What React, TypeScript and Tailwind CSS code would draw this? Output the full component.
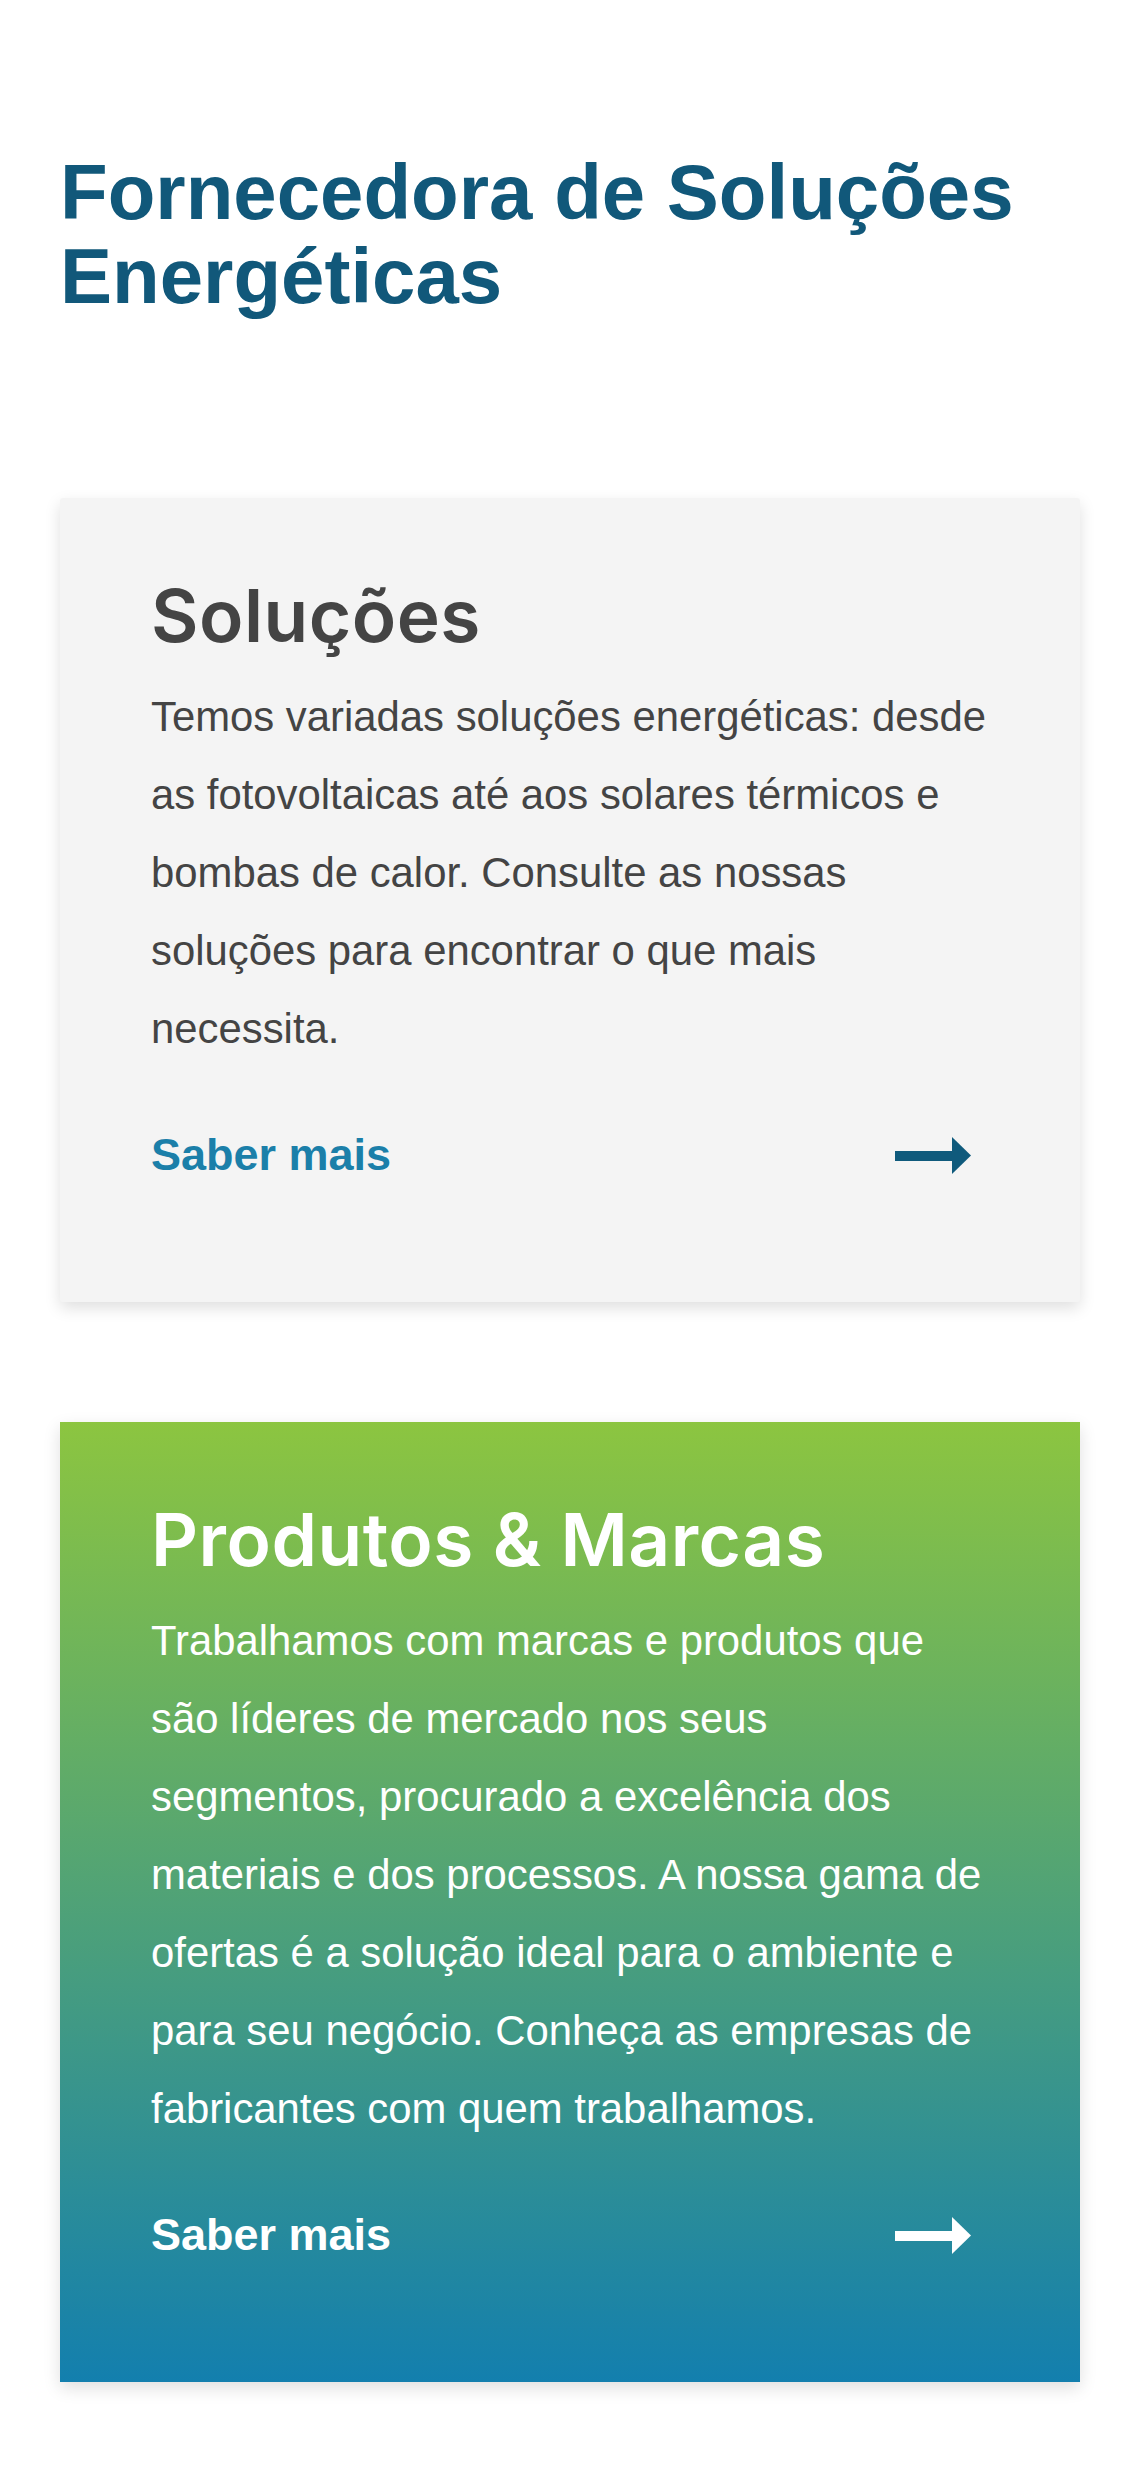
import React from "react";

function Arrow({ color }: { color: string }) {
  return (
    <svg width="76" height="37" viewBox="0 0 76 37" className="mr-[19px] shrink-0" aria-hidden="true">
      <rect x="0" y="14" width="58" height="10" fill={color} />
      <polygon points="57,0 76,18.5 57,37" fill={color} />
    </svg>
  );
}

type CardProps = {
  title: string;
  body: string;
  variant: "light" | "gradient";
};

function Card({ title, body, variant }: CardProps) {
  const light = variant === "light";
  return (
    <div
      className={
        light
          ? "rounded-[3px] bg-[#f4f4f4] pl-[91px] pr-[90px] pt-[78px] pb-[124px] shadow-[0_6px_16px_rgba(0,0,0,0.13)]"
          : "bg-[linear-gradient(180deg,#8cc540_0%,#137fae_100%)] pl-[91px] pr-[90px] pt-[78px] pb-[124px] shadow-[0_6px_16px_rgba(0,0,0,0.13)]"
      }
    >
      <h2
        className={
          light
            ? "font-['Inter','Noto_Sans',sans-serif] text-[73px] leading-[80px] font-semibold tracking-[0.5px] text-[#444444]"
            : "font-['Inter','Noto_Sans',sans-serif] text-[73px] leading-[80px] font-semibold tracking-[0.5px] text-white"
        }
      >
        {title}
      </h2>
      <p
        className={
          light
            ? "mt-[22px] font-['Liberation_Sans',Arial,sans-serif] text-[41.85px] leading-[78px] text-[#444444]"
            : "mt-[22px] font-['Liberation_Sans',Arial,sans-serif] text-[41.85px] leading-[78px] text-white"
        }
      >
        {body}
      </p>
      <div className="mt-[64px] flex items-center justify-between">
        <span
          className={
            light
              ? "font-['Liberation_Sans',Arial,sans-serif] text-[45px] leading-[46px] font-bold text-[#1b7fa9]"
              : "font-['Liberation_Sans',Arial,sans-serif] text-[45px] leading-[46px] font-bold text-white"
          }
        >
          Saber mais
        </span>
        <Arrow color={light ? "#0f5a7c" : "#ffffff"} />
      </div>
    </div>
  );
}

export default function App() {
  return (
    <div className="flex min-h-[2469px] flex-col bg-white px-[60px] pt-[150px] pb-[87px]">
      <h1 className="font-['Liberation_Sans',Arial,sans-serif] text-[78px] leading-[84px] font-bold text-[#11587a]">
        Fornecedora de Soluções Energéticas
      </h1>

      <div className="mt-[180px] flex flex-col gap-[120px]">
        <Card
          variant="light"
          title="Soluções"
          body="Temos variadas soluções energéticas: desde as fotovoltaicas até aos solares térmicos e bombas de calor. Consulte as nossas soluções para encontrar o que mais necessita."
        />
        <Card
          variant="gradient"
          title="Produtos & Marcas"
          body="Trabalhamos com marcas e produtos que são líderes de mercado nos seus segmentos, procurado a excelência dos materiais e dos processos. A nossa gama de ofertas é a solução ideal para o ambiente e para seu negócio. Conheça as empresas de fabricantes com quem trabalhamos."
        />
      </div>
    </div>
  );
}
